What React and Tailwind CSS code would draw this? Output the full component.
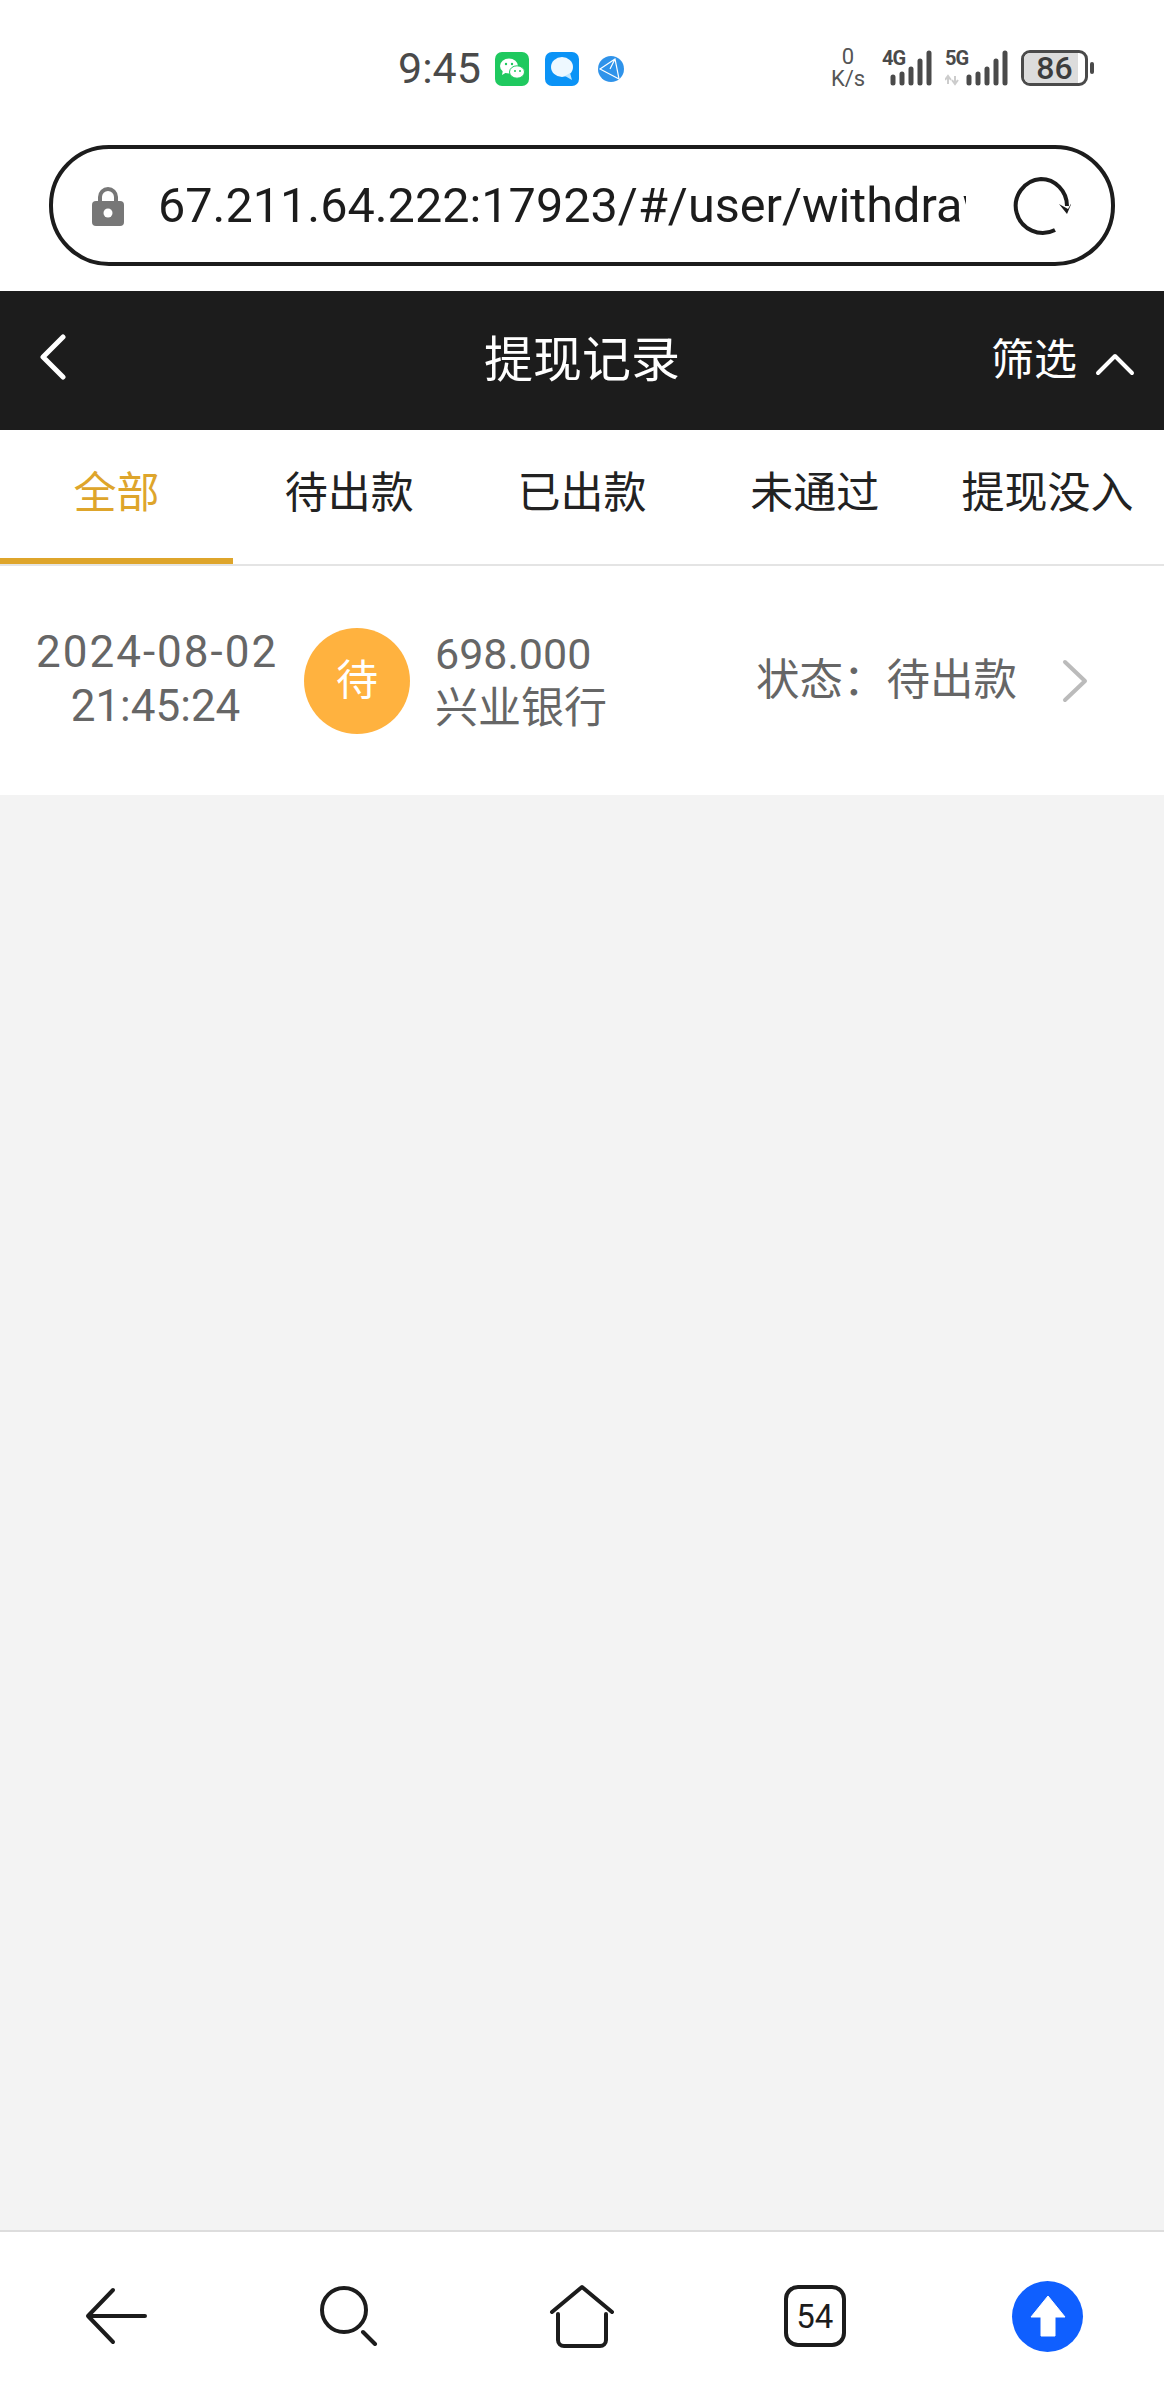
const tabs = ["全部", "待出款", "已出款", "未通过", "提现没入"];

function StatusBar() {
  return (
    <div className="flex h-[90px] items-center pl-[398px] pt-[46px] text-[#4a4a4a]">
      <span className="w-[97px] text-[43px] leading-none">9:45</span>
      {/* wechat */}
      <svg width="34" height="34" viewBox="0 0 34 34" className="mt-[1px]">
        <rect width="34" height="34" rx="7" fill="#1fc95f" />
        <ellipse cx="14" cy="14" rx="9" ry="7.5" fill="#fff" />
        <path d="M8 18l-1 5 5-3z" fill="#fff" />
        <ellipse cx="22" cy="20" rx="7.5" ry="6.2" fill="#fff" stroke="#1fc95f" />
        <circle cx="11" cy="12" r="1.2" fill="#1fc95f" />
        <circle cx="17" cy="12" r="1.2" fill="#1fc95f" />
        <circle cx="20" cy="19" r="1" fill="#1fc95f" />
        <circle cx="25" cy="19" r="1" fill="#1fc95f" />
      </svg>
      {/* messages */}
      <svg width="34" height="34" viewBox="0 0 34 34" className="ml-[16px] mt-[1px]">
        <rect width="34" height="34" rx="7" fill="#0b93f6" />
        <ellipse cx="17" cy="15" rx="11" ry="10" fill="#eef8ff" />
        <path d="M20 24l7 4-2-7z" fill="#bfe6ff" />
      </svg>
      {/* browser */}
      <svg width="26" height="26" viewBox="0 0 26 26" className="ml-[19px] mt-[1px]">
        <circle cx="13" cy="13" r="13" fill="#2f93ea" />
        <path d="M2 13L17 3l4 20zM2 13l19 10M17 3l-5 10" fill="none" stroke="#fff" strokeWidth="1.2" />
      </svg>
      <div className="ml-[206px] flex w-[36px] flex-col items-center text-[22px] leading-[22px] text-[#555]">
        <span>0</span>
        <span>K/s</span>
      </div>
      <div className="relative ml-[16px] h-[36px] w-[51px]">
        <span className="absolute left-0 top-[-4px] text-[20px] font-bold leading-[24px] tracking-[-1px]">4G</span>
        <svg width="51" height="36" viewBox="0 0 51 36">
          <g stroke="#4a4a4a" strokeWidth="5" strokeLinecap="round">
            <path d="M11 27v6M20 24v9M29 19v14M38 11v22M47 3v30" />
          </g>
        </svg>
      </div>
      <div className="relative ml-[12px] h-[36px] w-[64px]">
        <span className="absolute left-0 top-[-4px] text-[20px] font-bold leading-[24px] tracking-[-1px]">5G</span>
        <svg width="64" height="36" viewBox="0 0 64 36">
          <path d="M3 26v8M0 30l3-4 3 4M10 26v8M7 30l3 4 3-4" fill="none" stroke="#ccc" strokeWidth="2" />
          <g stroke="#4a4a4a" strokeWidth="5" strokeLinecap="round">
            <path d="M24 27v6M33 24v9M42 19v14M51 11v22M60 3v30" />
          </g>
        </svg>
      </div>
      <div className="relative ml-[12px] flex h-[36px] w-[67px] items-center justify-center overflow-hidden rounded-[9px] border-[3px] border-[#4a4a4a]">
        <div className="absolute inset-y-0 left-0 w-[54px] bg-[#dcdcdc]" />
        <span className="relative text-[32px] font-medium leading-none text-[#3c3c3c]">86</span>
      </div>
      <div className="ml-[2px] h-[12px] w-[4px] rounded-full bg-[#4a4a4a]" />
    </div>
  );
}

function AddressBar() {
  return (
    <div className="h-[201px] px-[49px] pt-[55px]">
      <div className="flex h-[121px] items-center rounded-[60px] border-[4px] border-[#1c1c1c] pl-[39px]">
        <svg width="32" height="40" viewBox="0 0 32 40" className="shrink-0">
          <path d="M8 18v-7a8 8 0 0 1 16 0v7" fill="none" stroke="#777" strokeWidth="4" />
          <rect y="15" width="32" height="25" rx="4" fill="#777" />
          <circle cx="16" cy="27" r="4.5" fill="#fff" />
        </svg>
        <div className="ml-[34px] mt-[2px] w-[808px] shrink-0 overflow-hidden whitespace-nowrap text-[48.6px] leading-none text-[#1c1c1c]">
          67.211.64.222:17923/#/user/withdraw
        </div>
        <svg width="60" height="60" viewBox="0 0 60 60" className="ml-[45px] shrink-0">
          <path d="M44 54A27 27 0 1 1 30 3c14 0 26 12 26 27" fill="none" stroke="#1c1c1c" strokeWidth="4" />
          <path d="M48 28l9 5 4-7-5 12z" fill="#1c1c1c" />
        </svg>
      </div>
    </div>
  );
}

function TopBar() {
  return (
    <div className="relative flex h-[139px] items-center justify-center bg-[#1c1c1c] text-white">
      <svg width="28" height="46" viewBox="0 0 28 46" className="absolute left-[38px] top-[43px]">
        <path d="M25 3L5 23l20 20" fill="none" stroke="#fff" strokeWidth="5" strokeLinecap="round" strokeLinejoin="round" />
      </svg>
      <span className="text-[49px] leading-none">提现记录</span>
      <div className="absolute left-[991px] top-[48px] flex items-center">
        <span className="text-[43px] leading-none">筛选</span>
        <svg width="40" height="24" viewBox="0 0 40 24" className="ml-[18px] mt-[6px]">
          <path d="M3 21L20 4l17 17" fill="none" stroke="#fff" strokeWidth="4" strokeLinecap="round" strokeLinejoin="round" />
        </svg>
      </div>
    </div>
  );
}

function Tabs() {
  return (
    <div className="grid h-[136px] grid-cols-5 border-b-2 border-[#e4e4e4] bg-white">
      {tabs.map((t, i) => (
        <div key={t} className={`flex h-[134px] items-start justify-center whitespace-nowrap pt-[42px] text-[43px] leading-none ${i === 0 ? "border-b-[6px] border-[#dea52b] text-[#dea52b]" : "text-[#222]"}`}>
          {t}
        </div>
      ))}
    </div>
  );
}

function RecordRow() {
  return (
    <div className="flex h-[229px] items-center bg-white pl-[36px] text-[44px] text-[#666]">
      <div className="mb-[3px] w-[239px] text-center leading-[54px]">
        <div className="whitespace-nowrap tracking-[2px]">2024-08-02</div>
        <div>21:45:24</div>
      </div>
      <div className="ml-[29px] flex h-[106px] w-[106px] items-center justify-center rounded-full bg-[#ffb23f] text-[42px] text-white">待</div>
      <div className="ml-[25px] w-[321px] text-[43px] leading-[54px]">
        <div>698.000</div>
        <div>兴业银行</div>
      </div>
      <div className="whitespace-nowrap text-[43.5px] leading-none">{"状态\uFF1A待出款"}</div>
      <svg width="28" height="44" viewBox="0 0 28 44" className="ml-[44px]">
        <path d="M4 3l20 19L4 41" fill="none" stroke="#bbb" strokeWidth="4" strokeLinecap="round" strokeLinejoin="round" />
      </svg>
    </div>
  );
}

function BottomBar() {
  return (
    <div className="grid h-[170px] grid-cols-5 border-t-2 border-[#ddd] bg-white text-[#1c1c1c]">
      <div className="flex items-center justify-center">
        <svg width="62" height="58" viewBox="0 0 62 58">
          <path d="M3 29h57M28 3L3 29l25 26" fill="none" stroke="#1c1c1c" strokeWidth="4" strokeLinecap="round" strokeLinejoin="round" />
        </svg>
      </div>
      <div className="flex items-center justify-center">
        <svg width="58" height="60" viewBox="0 0 58 60">
          <circle cx="24" cy="24" r="22" fill="none" stroke="#1c1c1c" strokeWidth="4" />
          <path d="M43 46l12 12" stroke="#1c1c1c" strokeWidth="4" strokeLinecap="round" />
        </svg>
      </div>
      <div className="flex items-center justify-center">
        <svg width="66" height="64" viewBox="0 0 66 64">
          <path d="M3 28L33 3l30 25M9 30v26a6 6 0 0 0 6 6h36a6 6 0 0 0 6-6V30" fill="none" stroke="#1c1c1c" strokeWidth="4" strokeLinecap="round" strokeLinejoin="round" />
        </svg>
      </div>
      <div className="flex items-center justify-center">
        <div className="flex h-[62px] w-[62px] items-center justify-center rounded-[14px] border-[4px] border-[#1c1c1c] text-[33px] leading-none">54</div>
      </div>
      <div className="flex items-center justify-center">
        <div className="flex h-[71px] w-[71px] items-center justify-center rounded-full bg-[#0f5fff]">
          <svg width="38" height="42" viewBox="0 0 38 42">
            <path d="M19 1L36 22H26V41H12V22H2z" fill="#fff" stroke="#fff" strokeWidth="1" strokeLinejoin="round" />
          </svg>
        </div>
      </div>
    </div>
  );
}

export default function App() {
  return (
    <div className="flex h-[2400px] w-[1164px] flex-col overflow-hidden bg-white font-['Roboto','Noto_Sans_CJK_SC',sans-serif]">
      <StatusBar />
      <AddressBar />
      <TopBar />
      <Tabs />
      <RecordRow />
      <div className="flex-1 bg-[#f3f3f3]" />
      <BottomBar />
    </div>
  );
}
